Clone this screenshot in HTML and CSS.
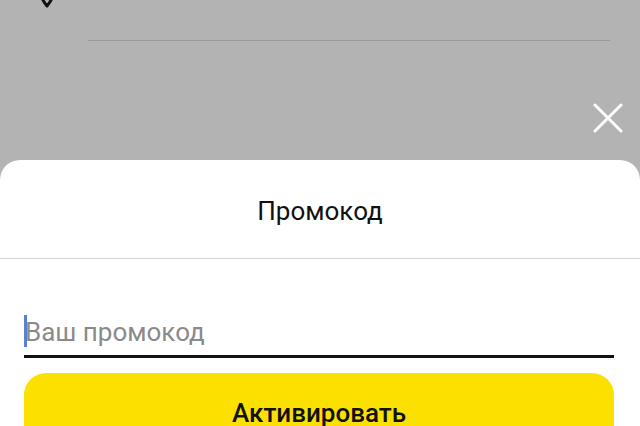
FILE: index.html
```html
<!DOCTYPE html>
<html lang="ru">
<head>
<meta charset="utf-8">
<link rel="stylesheet" href="styles.css">
</head>
<body>
<div class="screen">
  <div class="backdrop">
    <div class="pin-row">
      <svg class="pin" width="16" height="22" viewBox="0 0 16 22"><path d="M8 20 C4 15 2 12 2 8 A6 6 0 0 1 14 8 C14 12 12 15 8 20 Z" fill="none" stroke="#111" stroke-width="3" stroke-linejoin="round"/></svg>
    </div>
    <div class="sep"></div>
    <div class="close-row">
      <svg class="close" width="30" height="30" viewBox="0 0 30 30"><path d="M2 2 L28 28 M28 2 L2 28" stroke="#fff" stroke-width="3" stroke-linecap="round"/></svg>
    </div>
  </div>
  <div class="sheet">
    <div class="title">Промокод</div>
    <div class="divider"></div>
    <div class="form">
      <div class="field">
        <span class="caret"></span>
        <span class="placeholder">Ваш промокод</span>
      </div>
      <div class="button">Активировать</div>
    </div>
  </div>
</div>
</body>
</html>
```
FILE: styles.css
```css
html, body {
  margin: 0;
  padding: 0;
}
body {
  font-family: Roboto, "Noto Sans", sans-serif;
}
.screen {
  width: 640px;
  height: 426px;
  overflow: hidden;
  background: #b3b3b3;
  display: flex;
  flex-direction: column;
}
.backdrop {
  height: 160px;
  flex-shrink: 0;
  display: flex;
  flex-direction: column;
}
.pin-row {
  height: 40px;
  padding-left: 39px;
}
.pin {
  display: block;
  margin-top: -14px;
}
.sep {
  height: 1px;
  background: #999;
  margin: 0 30px 0 88px;
}
.close-row {
  display: flex;
  justify-content: flex-end;
  padding-right: 17px;
  margin-top: 62px;
}
.close {
  display: block;
}
.sheet {
  flex: 1;
  background: #fff;
  border-radius: 20px 20px 0 0;
  display: flex;
  flex-direction: column;
}
.title {
  height: 98px;
  display: flex;
  align-items: center;
  justify-content: center;
  padding-top: 4px;
  box-sizing: border-box;
  font-size: 26px;
  color: #111;
}
.divider {
  height: 1px;
  background: #d4d4d4;
}
.form {
  padding: 0 26px 0 24px;
  display: flex;
  flex-direction: column;
}
.field {
  margin-top: 56px;
  height: 40px;
  border-bottom: 3px solid #111;
  display: flex;
  align-items: flex-start;
}
.caret {
  width: 3px;
  height: 32px;
  background: #5a80d8;
}
.placeholder {
  font-size: 26px;
  color: #8a8a8a;
  line-height: 34px;
  margin-left: -2px;
}
.button {
  margin-top: 15px;
  height: 80px;
  background: #fce000;
  border-radius: 22px;
  display: flex;
  justify-content: center;
  padding-top: 25px;
  box-sizing: border-box;
  font-size: 26px;
  font-weight: 500;
  color: #111;
}
```
